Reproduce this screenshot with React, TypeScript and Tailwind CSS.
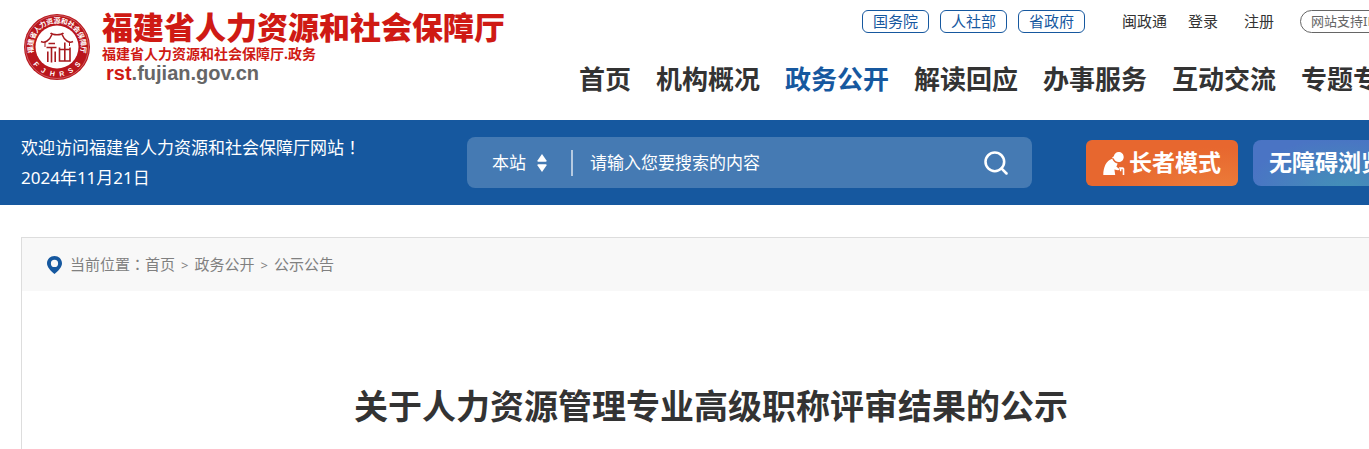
import { Search } from 'lucide-react';

interface NavItem {
  label: string;
  active?: boolean;
}

const portals = ['国务院', '人社部', '省政府'];

const navItems: NavItem[] = [
  { label: '首页' },
  { label: '机构概况' },
  { label: '政务公开', active: true },
  { label: '解读回应' },
  { label: '办事服务' },
  { label: '互动交流' },
  { label: '专题专栏' },
];

const crumbs = ['首页', '政务公开', '公示公告'];

const ringTop = '福建省人力资源和社会保障厅'.split('');
const ringBottom = 'FJHRSS'.split('');

function Emblem() {
  return (
    <svg viewBox="0 0 66 66" className="h-[66px] w-[66px] shrink-0" aria-hidden="true">
      <circle cx="33" cy="33" r="33" fill="#b9161c" />
      <circle cx="33" cy="33" r="31.500" fill="none" stroke="#fff" strokeOpacity="0.5" strokeWidth="0.6" />
      <circle cx="33" cy="33" r="21.500" fill="#fff" />
      <g fill="#fff" fontSize="7" fontWeight="700" textAnchor="middle">
        {ringTop.map((char, i) => (
          <text key={i} x="33" y="9" transform={`rotate(${(i - 6) * 16} 33 33)`}>
            {char}
          </text>
        ))}
      </g>
      <g fill="#fff" fontSize="7" fontWeight="700" textAnchor="middle" fontFamily="Liberation Sans, sans-serif">
        {ringBottom.map((char, i) => (
          <text key={i} x="33" y="62.500" transform={`rotate(${(2.5 - i) * 20} 33 33)`}>
            {char}
          </text>
        ))}
      </g>
      <g fill="none" stroke="#a81a1f">
        {/* swallowtail roof */}
        <path d="M17 27.500c4 2 8.500-1 11-7M49 27.500c-4 2-8.500-1-11-7" strokeWidth="1.500" />
        <path d="M26.500 19.200c1.500 1.300 3 1.600 6.500 1.600s5-.3 6.500-1.600" strokeWidth="1.600" />
        <path d="M21 28v5M45.500 28v4" strokeWidth="1" />
        {/* seal script mark */}
        <path
          d="M24.500 29.500h6.500M22.500 33.500h10M27.500 33.500v15M23.800 37.500v10.500M31.200 37.500v10.500"
          strokeWidth="1.600"
        />
        <path d="M35.500 33.500v13.500h10.500v-13.500M40.800 28.500v18.500M35.500 35.500h10.500" strokeWidth="1.600" />
      </g>
    </svg>
  );
}

function ElderIcon() {
  return (
    <svg viewBox="0 0 22 24" className="h-6 w-[22px]" fill="#fff" aria-hidden="true">
      <path d="M15.500 1c3 0 5.200 2 5.200 5s-2.200 5-5 5c-2.500 0-4.200-1.600-4.800-3.600L8.800 7l2-1.700C11.400 2.600 13.200 1 15.500 1z" />
      <path d="M9.200 7.800c1 2.700 3 4.200 5.400 4.700l-1.200 3.200 2.400 1.800c.8.800.2 1.900-.8 1.700l-3.600-.7.800 5.500H.3C.3 17 3 9.500 9.200 7.800z" />
      <path d="M16 16.300h3.600c1 0 1.700.7 1.700 1.700v6h-1.600v-5.800h-1.400v2h-1.200z" />
    </svg>
  );
}

function Header() {
  return (
    <header className="flex h-[120px] justify-between">
      <a href="#" className="flex items-start gap-3 pt-[14px] pl-[3px]">
        <Emblem />
        <div className="-mt-1 text-[#cf1a14]">
          <p className="text-[31px] leading-[34px] font-black">福建省人力资源和社会保障厅</p>
          <p className="text-sm leading-5 font-bold">福建省人力资源和社会保障厅.政务</p>
          <p className="pl-1 font-['Liberation_Sans',sans-serif] text-[20px] leading-[18px] font-bold">
            rst<span className="text-[#666]">.fujian.gov.cn</span>
          </p>
        </div>
      </a>

      <div className="flex shrink-0 flex-col items-end pt-[10px]">
        <div className="flex items-center text-[15px] leading-[21px]">
          <div className="mr-[37px] flex gap-[11px]">
            {portals.map((name) => (
              <a key={name} href="#" className="rounded-md border border-[#16589f] px-[10px] text-[#16589f]">
                {name}
              </a>
            ))}
          </div>
          <div className="mr-[26px] flex text-[#333]">
            <a href="#" className="mr-[21px]">闽政通</a>
            <a href="#" className="mr-[26px]">登录</a>
            <a href="#">注册</a>
          </div>
          <a href="#" className="w-[105px] rounded-full border border-[#666] px-[10px] text-[13px] text-[#666]">
            网站支持IPv6
          </a>
        </div>
        <nav className="mt-[26px] flex gap-[25px] text-[26px] leading-10 font-bold text-[#333]">
          {navItems.map((item) => (
            <a key={item.label} href="#" className={item.active ? 'text-[#16589f]' : ''}>
              {item.label}
            </a>
          ))}
        </nav>
      </div>
    </header>
  );
}

function SearchBar() {
  return (
    <form className="flex h-[51px] w-[565px] items-center rounded-lg bg-[#457ab3] pr-[22px] pl-[25px]">
      <div className="flex items-center gap-[10px]">
        <select aria-label="搜索范围" className="w-[35px] appearance-none bg-transparent text-[17px] leading-6 outline-none">
          <option>本站</option>
        </select>
        <svg viewBox="0 0 10 18" className="h-[18px] w-[10px]" fill="#fff" aria-hidden="true">
          <path d="M5 0l4.500 6.500q.4 1.300-.8 1.300H1.300Q.1 7.800.5 6.500z" />
          <path d="M5 18l4.500-6.500q.4-1.300-.8-1.300H1.300q-1.200 0-.8 1.300z" />
        </svg>
      </div>
      <input
        type="text"
        aria-label="搜索内容"
        placeholder="请输入您要搜索的内容"
        className="ml-6 h-[26px] min-w-0 flex-1 border-l-2 border-[#b5cae1] bg-transparent pl-[17px] text-[17px] outline-none placeholder:text-white"
      />
      <button type="submit" aria-label="搜索">
        <Search className="h-7 w-7" strokeWidth={2.2} />
      </button>
    </form>
  );
}

export default function App() {
  return (
    <div className="flex min-h-screen flex-col overflow-x-hidden bg-white font-['Noto_Sans','Noto_Sans_CJK_SC',sans-serif]">
      <div className="mx-[21px] min-w-[1384px]">
        <Header />
      </div>

      <div className="min-w-[1426px] bg-[#16589f] px-[21px] text-white">
        <div className="flex h-[85px] items-center">
          <div className="w-[446px] text-[17px] leading-[30px]">
            <p>
              欢迎访问福建省人力资源和社会保障厅网站
              <span className="font-['Noto_Sans_CJK_TC',sans-serif]" lang="zh-TW">！</span>
            </p>
            <p>2024年11月21日</p>
          </div>
          <SearchBar />
          <div className="ml-[54px] flex gap-[15px] text-[23px] font-bold">
            <button
              type="button"
              className="flex h-[46px] w-[152px] items-center justify-center gap-1 rounded-md bg-[radial-gradient(ellipse_at_85%_110%,#ec7d3a,#e7672f_60%)]"
            >
              <ElderIcon />
              长者模式
            </button>
            <button
              type="button"
              className="h-[46px] w-[152px] rounded-lg bg-[radial-gradient(ellipse_at_60%_110%,#4391b7,#4a74c4_75%)] pl-4 text-left"
            >
              无障碍浏览
            </button>
          </div>
        </div>
      </div>

      <main className="mx-[21px] mt-8 min-w-[1380px] flex-1 border border-b-0 border-[#ddd]">
        <nav className="flex h-[53px] items-center bg-[#f8f8f8] pl-[25px] text-[15px] text-[#808080]">
          <svg viewBox="0 0 15 18" className="mr-2 h-[18px] w-[15px]" aria-hidden="true">
            <path
              fill="#16589f"
              fillRule="evenodd"
              d="M7.500 0C11.700 0 15 3.200 15 7.300 15 11 11.500 15 7.500 18 3.500 15 0 11 0 7.300 0 3.200 3.300 0 7.500 0zm0 3.800a3.600 3.600 0 1 0 0 7.200 3.600 3.600 0 0 0 0-7.200z"
            />
          </svg>
          <span>
            当前位置<span className="font-['Noto_Sans_CJK_TC',sans-serif]" lang="zh-TW">：</span>
          </span>
          {crumbs.map((name, i) => (
            <span key={name}>
              {i > 0 && <span className="px-[6px] text-[13px]">&gt;</span>}
              <a href="#">{name}</a>
            </span>
          ))}
        </nav>
        <h1 className="pt-[90px] text-center text-[34px] leading-[50px] font-bold text-[#333]">
          关于人力资源管理专业高级职称评审结果的公示
        </h1>
      </main>
    </div>
  );
}
